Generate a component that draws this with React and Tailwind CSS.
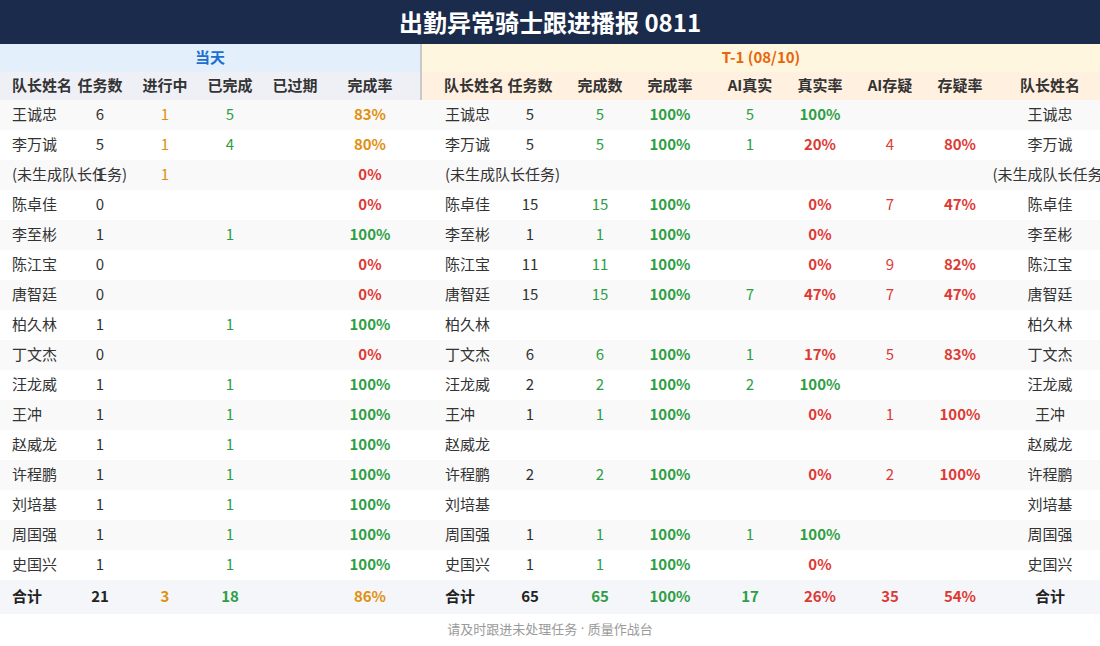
import clsx from "clsx";

const FONT = { fontFamily: '"Noto Sans CJK SC", "Noto Sans", sans-serif' };

// цвета
const C = {
  dark: "text-[#333333]",
  orange: "text-[#e0900f]",
  green: "text-[#2e9e44]",
  red: "text-[#dd3a35]",
};

const rateColor = (v) => {
  if (v == null) return "";
  const n = parseInt(v, 10);
  if (n >= 100) return C.green;
  if (n >= 80) return C.orange;
  return C.red;
};

const realColor = (v) => (v == null ? "" : parseInt(v, 10) >= 100 ? C.green : C.red);

// [name, 任务数, 进行中, 已完成, 已过期, 完成率]
const TODAY = [
  ["王诚忠", 6, 1, 5, null, "83%"],
  ["李万诚", 5, 1, 4, null, "80%"],
  ["(未生成队长任务)", 1, 1, null, null, "0%"],
  ["陈卓佳", 0, null, null, null, "0%"],
  ["李至彬", 1, null, 1, null, "100%"],
  ["陈江宝", 0, null, null, null, "0%"],
  ["唐智廷", 0, null, null, null, "0%"],
  ["柏久林", 1, null, 1, null, "100%"],
  ["丁文杰", 0, null, null, null, "0%"],
  ["汪龙威", 1, null, 1, null, "100%"],
  ["王冲", 1, null, 1, null, "100%"],
  ["赵威龙", 1, null, 1, null, "100%"],
  ["许程鹏", 1, null, 1, null, "100%"],
  ["刘培基", 1, null, 1, null, "100%"],
  ["周国强", 1, null, 1, null, "100%"],
  ["史国兴", 1, null, 1, null, "100%"],
];

// [任务数, 完成数, 完成率, AI真实, 真实率, AI存疑, 存疑率]
const PREV = [
  [5, 5, "100%", 5, "100%", null, null],
  [5, 5, "100%", 1, "20%", 4, "80%"],
  [null, null, null, null, null, null, null],
  [15, 15, "100%", null, "0%", 7, "47%"],
  [1, 1, "100%", null, "0%", null, null],
  [11, 11, "100%", null, "0%", 9, "82%"],
  [15, 15, "100%", 7, "47%", 7, "47%"],
  [null, null, null, null, null, null, null],
  [6, 6, "100%", 1, "17%", 5, "83%"],
  [2, 2, "100%", 2, "100%", null, null],
  [1, 1, "100%", null, "0%", 1, "100%"],
  [null, null, null, null, null, null, null],
  [2, 2, "100%", null, "0%", 2, "100%"],
  [null, null, null, null, null, null, null],
  [1, 1, "100%", 1, "100%", null, null],
  [1, 1, "100%", null, "0%", null, null],
];

const LEFT_W = ["w-[68px]", "w-[64px]", "w-[66px]", "w-[64px]", "w-[66px]", "w-[84px]"];
const RIGHT_W = ["w-[75px]", "w-[70px]", "w-[70px]", "w-[70px]", "w-[90px]", "w-[50px]", "w-[90px]", "w-[50px]", "w-[130px]"];

function Cell({ w, className, children, left }) {
  return (
    <div
      className={clsx(
        "shrink-0 flex items-center whitespace-nowrap h-full",
        left ? "justify-start" : "justify-center",
        w,
        className,
      )}
    >
      {children}
    </div>
  );
}

function HeadRow() {
  const lh = ["队长姓名", "任务数", "进行中", "已完成", "已过期", "完成率"];
  const rh = ["队长姓名", "任务数", "完成数", "完成率", "AI真实", "真实率", "AI存疑", "存疑率", "队长姓名"];
  return (
    <>
      <div className="flex h-[28px] text-[15px] font-bold">
        <div className="w-[420px] shrink-0 bg-[#e3f0fc] text-[#1a6fd0] flex items-center justify-center pb-[2px]">当天</div>
        <div className="w-[680px] shrink-0 bg-[#fff6df] text-[#e8650a] flex items-center justify-center pb-[2px] border-l-2 border-[#c9c9c9]">
          T-1 (08/10)
        </div>
      </div>
      <div className="flex h-[28px] text-[15px] font-bold text-[#333333]">
        <div className="w-[420px] shrink-0 flex bg-[#eef0f5] pb-[2px]">
          {lh.map((h, i) => (
            <Cell key={i} w={LEFT_W[i]} left={i === 0} className={i === 0 ? "pl-3" : ""}>
              {h}
            </Cell>
          ))}
        </div>
        <div className="shrink-0 flex bg-[#fff0df] pb-[2px] border-l-2 border-[#c9c9c9]">
          {rh.map((h, i) => (
            <Cell key={i} w={i === 0 ? "w-[73px]" : RIGHT_W[i]} left={i === 0} className={i === 0 ? "pl-[22px]" : ""}>
              {h}
            </Cell>
          ))}
        </div>
      </div>
    </>
  );
}

function Row({ l, r, idx }) {
  const [name, tasks, doing, done, expired, rate] = l;
  const [rt, rd, rr, aiT, tr, aiQ, qr] = r;
  return (
    <div className={clsx("flex h-[30px] pb-[2px] text-[15px] text-[#333333]", idx % 2 === 0 ? "bg-[#f9f9f9]" : "bg-white")}>
      <div className="w-[420px] shrink-0 flex">
        <Cell w={LEFT_W[0]} left className="pl-3 relative z-0">{name}</Cell>
        <Cell w={LEFT_W[1]} className="relative z-10">{tasks}</Cell>
        <Cell w={LEFT_W[2]} className={C.orange}>{doing}</Cell>
        <Cell w={LEFT_W[3]} className={C.green}>{done}</Cell>
        <Cell w={LEFT_W[4]}>{expired}</Cell>
        <Cell w={LEFT_W[5]} className={clsx("font-bold", rateColor(rate))}>{rate}</Cell>
      </div>
      <div className="shrink-0 flex">
        <Cell w={RIGHT_W[0]} left className="pl-[25px]">{name}</Cell>
        <Cell w={RIGHT_W[1]}>{rt}</Cell>
        <Cell w={RIGHT_W[2]} className={C.green}>{rd}</Cell>
        <Cell w={RIGHT_W[3]} className={clsx("font-bold", rateColor(rr))}>{rr}</Cell>
        <Cell w={RIGHT_W[4]} className={C.green}>{aiT}</Cell>
        <Cell w={RIGHT_W[5]} className={clsx("font-bold", realColor(tr))}>{tr}</Cell>
        <Cell w={RIGHT_W[6]} className={C.red}>{aiQ}</Cell>
        <Cell w={RIGHT_W[7]} className={clsx("font-bold", C.red)}>{qr}</Cell>
        <Cell w={RIGHT_W[8]}>{name}</Cell>
      </div>
    </div>
  );
}

function TotalRow() {
  return (
    <div className="flex h-[34px] pb-[2px] text-[15px] font-bold text-[#222222] bg-[#f4f6fa]">
      <div className="w-[420px] shrink-0 flex">
        <Cell w={LEFT_W[0]} left className="pl-3">合计</Cell>
        <Cell w={LEFT_W[1]}>21</Cell>
        <Cell w={LEFT_W[2]} className={C.orange}>3</Cell>
        <Cell w={LEFT_W[3]} className={C.green}>18</Cell>
        <Cell w={LEFT_W[4]} />
        <Cell w={LEFT_W[5]} className={C.orange}>86%</Cell>
      </div>
      <div className="shrink-0 flex">
        <Cell w={RIGHT_W[0]} left className="pl-[25px]">合计</Cell>
        <Cell w={RIGHT_W[1]}>65</Cell>
        <Cell w={RIGHT_W[2]} className={C.green}>65</Cell>
        <Cell w={RIGHT_W[3]} className={C.green}>100%</Cell>
        <Cell w={RIGHT_W[4]} className={C.green}>17</Cell>
        <Cell w={RIGHT_W[5]} className={C.red}>26%</Cell>
        <Cell w={RIGHT_W[6]} className={C.red}>35</Cell>
        <Cell w={RIGHT_W[7]} className={C.red}>54%</Cell>
        <Cell w={RIGHT_W[8]}>合计</Cell>
      </div>
    </div>
  );
}

export default function App() {
  return (
    <div className="w-[1100px] h-[646px] overflow-hidden bg-white" style={FONT}>
      <div className="h-[44px] bg-[#1a2b4b] flex items-center justify-center text-white text-[24px] font-bold">
        出勤异常骑士跟进播报 0811
      </div>
      <HeadRow />
      {TODAY.map((l, i) => (
        <Row key={i} l={l} r={PREV[i]} idx={i} />
      ))}
      <TotalRow />
      <div className="h-[32px] pb-[2px] flex items-center justify-center text-[13px] text-[#9a9a9a] whitespace-pre">
        请及时跟进未处理任务<span className="font-['Noto_Sans']"> · </span>质量作战台
      </div>
    </div>
  );
}
